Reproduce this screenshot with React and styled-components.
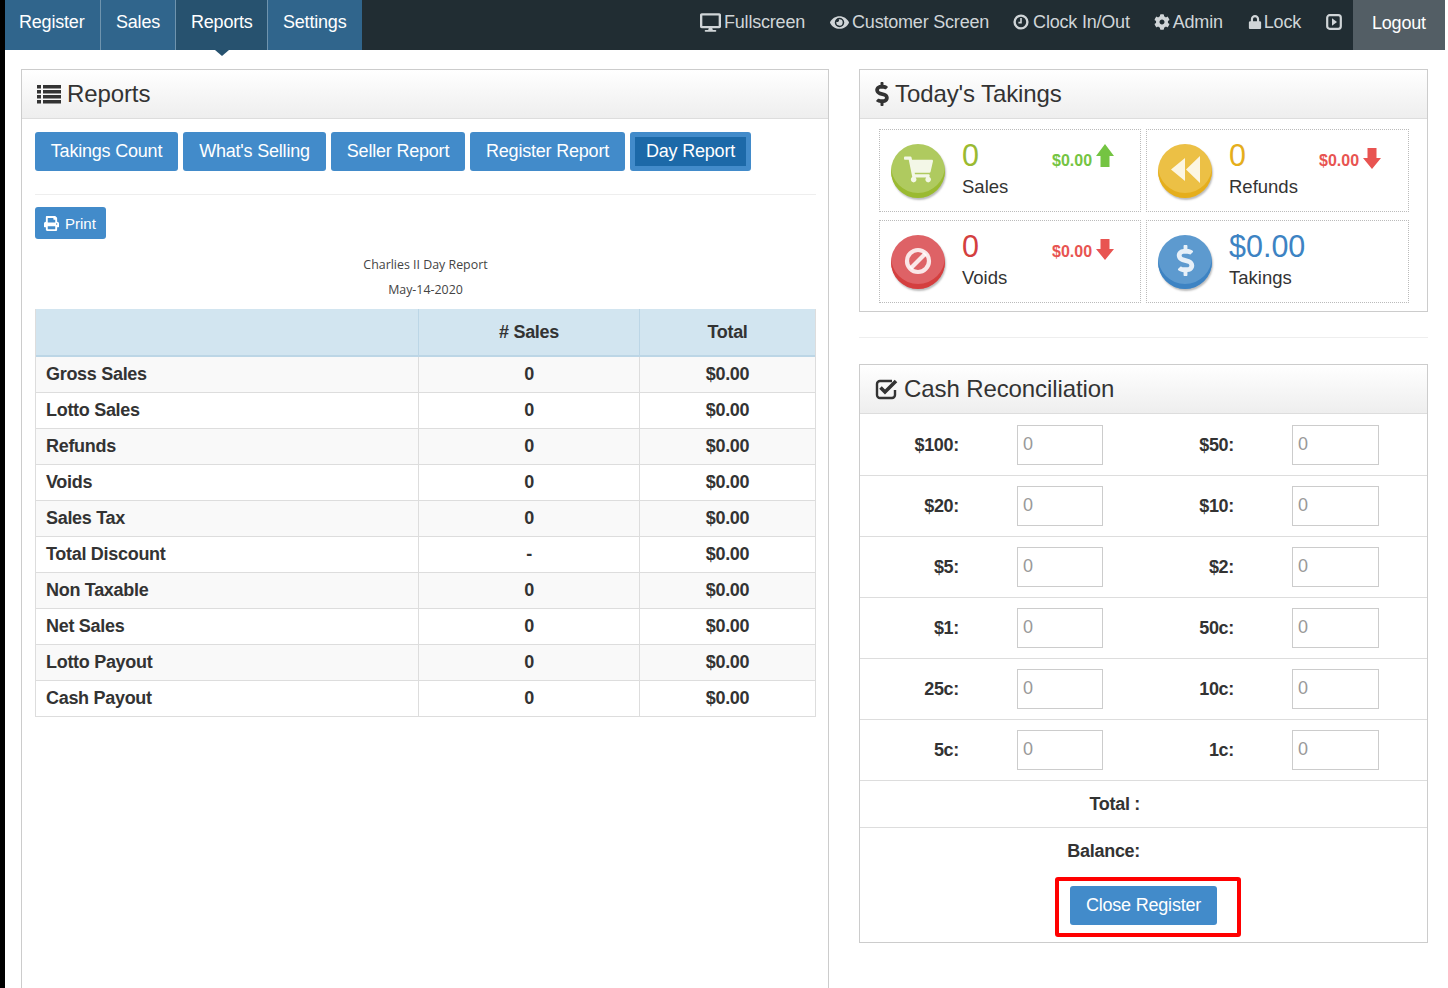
import styled, { createGlobalStyle } from "styled-components";
import { FaDesktop, FaEye, FaCog, FaLock, FaDollarSign, FaPrint, FaShoppingCart } from "react-icons/fa";

const Global = createGlobalStyle`
  * { box-sizing: border-box; }
  html, body { margin: 0; padding: 0; background: #fff; }
  body {
    font-family: "Liberation Sans", Arial, sans-serif;
    color: #333;
    border-left: 5px solid #000;
    width: 1445px;
    height: 988px;
    overflow: hidden;
  }
`;

const TopBar = styled.div`
  height: 50px;
  background: #212d33;
  display: flex;
  justify-content: space-between;
`;
const NavLeft = styled.div`
  display: flex;
`;
const NavTab = styled.div`
  position: relative;
  width: ${(p) => p.$w}px;
  height: 50px;
  padding: 12px 0 0 ${(p) => p.$pl || 15}px;
  background: ${(p) => (p.$active ? "#27526f" : "#30658c")};
  border-right: ${(p) => (p.$last ? "none" : "1px solid #6f94ae")};
  color: #fff;
  font-size: 18px;
  letter-spacing: -0.2px;
  ${(p) =>
    p.$active &&
    `&:after {
      content: "";
      position: absolute;
      left: 39px;
      top: 50px;
      border-left: 7px solid transparent;
      border-right: 7px solid transparent;
      border-top: 6px solid #27526f;
    }`}
`;
const NavRight = styled.div`
  display: flex;
  align-items: flex-start;
`;
const NavLink = styled.div`
  display: flex;
  align-items: center;
  height: 44px;
  margin-right: ${(p) => p.$mr}px;
  gap: ${(p) => p.$gap || 3}px;
  color: #d0d5d8;
  font-size: 18px;
  letter-spacing: -0.2px;
  svg { font-size: ${(p) => p.$icon || 16}px; }
`;
const Logout = styled.div`
  width: 92px;
  height: 50px;
  padding: 13px 0 0 19px;
  background: #535e65;
  color: #fff;
  font-size: 18px;
  letter-spacing: -0.2px;
`;

const Page = styled.div`
  display: grid;
  grid-template-columns: 808px 569px;
  column-gap: 30px;
  padding: 19px 0 0 16px;
`;
const Column = styled.div`
  display: flex;
  flex-direction: column;
`;
const Panel = styled.div`
  border: 1px solid #ccc;
  background: #fff;
  min-height: ${(p) => p.$min || 0}px;
`;
const PanelHead = styled.div`
  height: 49px;
  display: flex;
  align-items: center;
  gap: ${(p) => p.$gap || 6}px;
  padding-left: 15px;
  background: linear-gradient(#fff, #eee);
  border-bottom: 1px solid #ddd;
  font-size: 24px;
  letter-spacing: -0.1px;
  color: #333;
  svg { flex: none; width: ${(p) => p.$icon || 24}px; font-size: 24px; }
`;
const ReportBody = styled.div`
  padding: 13px 12px 0 13px;
`;
const BtnRow = styled.div`
  display: flex;
  gap: 5px;
  padding-bottom: 23px;
  border-bottom: 1px solid #eee;
`;
const Btn = styled.button`
  width: ${(p) => p.$w}px;
  height: 39px;
  border: ${(p) => (p.$active ? "5px solid #428bca" : "none")};
  border-radius: 3px;
  background: ${(p) => (p.$active ? "#1c69a8" : "#428bca")};
  color: #fff;
  font: 18px "Liberation Sans", Arial, sans-serif;
  letter-spacing: -0.2px;
  padding: 0;
`;
const PrintBtn = styled.button`
  display: flex;
  align-items: center;
  gap: 6px;
  width: 71px;
  height: 32px;
  margin-top: 12px;
  padding: 0 0 0 9px;
  border: none;
  border-radius: 3px;
  background: #428bca;
  color: #fff;
  font: 15px "Liberation Sans", Arial, sans-serif;
  svg { font-size: 15px; }
`;
const Captions = styled.div`
  margin: 13px 0 7px;
`;
const Caption = styled.div`
  text-align: center;
  font: 12.4px/25px "Open Sans", sans-serif;
  color: #444;
`;
const Table = styled.div`
  width: 781px;
  border-left: 1px solid #ddd;
  border-right: 1px solid #ddd;
`;
const Row = styled.div`
  display: grid;
  grid-template-columns: 382px 221px 1fr;
  height: ${(p) => (p.$head ? 48 : 36)}px;
  background: ${(p) => (p.$head ? "#d2e5f0" : p.$odd ? "#f9f9f9" : "#fff")};
  border-bottom: ${(p) => (p.$head ? "2px solid #bcd6e6" : "1px solid #ddd")};
  font-size: 18px;
  font-weight: 700;
  color: #333;
`;
const Cell = styled.div`
  display: flex;
  align-items: center;
  justify-content: ${(p) => (p.$left ? "flex-start" : "center")};
  padding-left: ${(p) => (p.$left ? 10 : 0)}px;
  border-left: ${(p) => (p.$left ? "none" : `1px solid ${p.$head ? "#bcd6e6" : "#ddd"}`)};
  letter-spacing: -0.3px;
`;

const Tiles = styled.div`
  display: grid;
  grid-template-columns: 262px 263px;
  grid-auto-rows: 83px;
  gap: 8px 5px;
  padding: 10px 18px 8px 19px;
`;
const Tile = styled.div`
  position: relative;
  display: flex;
  border: 1px dotted #bbb;
  padding: 14px 0 0 11px;
`;
const Coin = styled.div`
  width: 54px;
  height: 54px;
  border-radius: 50%;
  display: flex;
  align-items: center;
  justify-content: center;
  padding-bottom: 3px;
  background: ${(p) => p.$c};
  box-shadow: inset 0 -5px 0 ${(p) => p.$d}, 1px 2px 2px #bbb;
  color: rgba(255, 255, 255, 0.85);
  font-size: ${(p) => p.$size || 29}px;
`;
const TileText = styled.div`
  margin-left: 17px;
  margin-top: -3px;
`;
const TileValue = styled.div`
  font-size: 30.5px;
  line-height: 28px;
  color: ${(p) => p.$c};
`;
const TileLabel = styled.div`
  margin-top: 7px;
  font-size: 18.5px;
  line-height: 22px;
  color: #333;
`;
const Delta = styled.div`
  position: absolute;
  left: 172px;
  top: 1px;
  height: 60px;
  display: flex;
  align-items: center;
  gap: 4px;
  font-size: 16px;
  font-weight: 700;
  color: ${(p) => p.$c};
`;
const Arrow = styled.svg`
  margin-bottom: ${(p) => p.$up}px;
`;
const Rule = styled.div`
  height: 1px;
  margin: 25px 0 26px;
  background: #eee;
`;
const CashRow = styled.div`
  display: flex;
  height: 61px;
  border-top: ${(p) => (p.$first ? "none" : "1px solid #ddd")};
  padding-top: ${(p) => (p.$first ? 11 : 10)}px;
`;
const Pair = styled.div`
  display: flex;
  width: 275px;
`;
const CashLabel = styled.div`
  width: 99px;
  text-align: right;
  font-size: 18px;
  font-weight: 700;
  letter-spacing: -0.3px;
  line-height: 40px;
`;
const Amount = styled.input`
  width: ${(p) => p.$w}px;
  height: 40px;
  margin-left: 58px;
  padding: 0 5px 2px;
  border: 1px solid #ccc;
  font: 18px "Liberation Sans", Arial, sans-serif;
  &::placeholder { color: #999; opacity: 1; }
`;
const SumRow = styled.div`
  height: 47px;
  border-top: 1px solid #ddd;
  padding: 13px 0 0;
  font-size: 18px;
  font-weight: 700;
  letter-spacing: -0.3px;
  line-height: 20px;
  span { display: block; width: 280px; text-align: right; }
`;
const CloseBox = styled.div`
  width: 186px;
  height: 60px;
  margin: 3px 0 5px 195px;
  padding: 5px 0 0 11px;
  border: 4px solid #f00;
  border-radius: 3px;
`;

const ArrowUp = ({ c }) => (
  <Arrow $up={11} width="18" height="23" viewBox="0 0 18 23"><path d="M9 0 L18 12 H13.5 V23 H4.5 V12 H0 Z" fill={c} /></Arrow>
);
const ArrowDown = ({ c }) => (
  <Arrow $up={5} width="18" height="21" viewBox="0 0 18 21"><path d="M4.5 0 H13.5 V10 H18 L9 21 L0 10 H4.5 Z" fill={c} /></Arrow>
);
const ListIcon = () => (
  <svg height="24" viewBox="0 0 24 24" fill="#333">
    <path d="M0 3h4v3.5H0zM6 3h18v3.5H6zM0 8h4v3.5H0zM6 8h18v3.5H6zM0 13h4v3.5H0zM6 13h18v3.5H6zM0 18h4v3.5H0zM6 18h18v3.5H6z" />
  </svg>
);
const CheckIcon = () => (
  <svg height="24" viewBox="0 0 24 24">
    <path d="M20 13v5a3 3 0 0 1-3 3H5a3 3 0 0 1-3-3V7a3 3 0 0 1 3-3h12" fill="none" stroke="#333" strokeWidth="2.4" />
    <path d="M5.5 10.5 L10 15 L21 4" fill="none" stroke="#333" strokeWidth="3.6" />
  </svg>
);
const ClockIcon = () => (
  <svg width="16" height="16" viewBox="0 0 16 16" fill="none" stroke="currentColor">
    <circle cx="8" cy="8" r="6.4" strokeWidth="2.4" />
    <path d="M8 4v4.6H5.4" strokeWidth="1.6" />
  </svg>
);
const ScreenIcon = () => (
  <svg width="16" height="16" viewBox="0 0 16 16">
    <rect x="1.2" y="1.2" width="13.6" height="13.6" rx="2.5" fill="none" stroke="currentColor" strokeWidth="2.2" />
    <path d="M6 4.2 L11 8 L6 11.8 Z" fill="currentColor" />
  </svg>
);
const BanIcon = () => (
  <svg width="28" height="28" viewBox="0 0 28 28" fill="none" stroke="currentColor" strokeWidth="4.2">
    <circle cx="14" cy="14" r="11" />
    <path d="M6.5 21.5 L21.5 6.5" />
  </svg>
);
const RewindIcon = () => (
  <svg width="29" height="27" viewBox="0 0 29 27" fill="currentColor">
    <path d="M0 13.5 L14 2 V25 Z M15 13.5 L29 0 V27 Z" />
  </svg>
);

const rows = [
  ["Gross Sales", "0"], ["Lotto Sales", "0"], ["Refunds", "0"], ["Voids", "0"], ["Sales Tax", "0"],
  ["Total Discount", "-"], ["Non Taxable", "0"], ["Net Sales", "0"], ["Lotto Payout", "0"], ["Cash Payout", "0"],
];
const cash = [["$100:", "$50:"], ["$20:", "$10:"], ["$5:", "$2:"], ["$1:", "50c:"], ["25c:", "10c:"], ["5c:", "1c:"]];
const green = "#74c442";
const red = "#e85451";

export default function App() {
  return (
    <>
      <Global />
      <TopBar>
        <NavLeft>
          <NavTab $w={96} $pl={14}>Register</NavTab>
          <NavTab $w={75}>Sales</NavTab>
          <NavTab $w={92} $active>Reports</NavTab>
          <NavTab $w={94} $last>Settings</NavTab>
        </NavLeft>
        <NavRight>
          <NavLink $mr={25} $icon={21}><FaDesktop />Fullscreen</NavLink>
          <NavLink $mr={24} $icon={19}><FaEye />Customer Screen</NavLink>
          <NavLink $mr={24} $gap={4}><ClockIcon />Clock In/Out</NavLink>
          <NavLink $mr={25}><FaCog />Admin</NavLink>
          <NavLink $mr={25} $icon={14} $gap={2}><FaLock />Lock</NavLink>
          <NavLink $mr={11}><ScreenIcon /></NavLink>
          <Logout>Logout</Logout>
        </NavRight>
      </TopBar>
      <Page>
        <Panel $min={960}>
          <PanelHead><ListIcon />Reports</PanelHead>
          <ReportBody>
            <BtnRow>
              <Btn $w={143}>Takings Count</Btn>
              <Btn $w={143}>What's Selling</Btn>
              <Btn $w={134}>Seller Report</Btn>
              <Btn $w={155}>Register Report</Btn>
              <Btn $w={121} $active>Day Report</Btn>
            </BtnRow>
            <PrintBtn><FaPrint />Print</PrintBtn>
            <Captions>
              <Caption>Charlies II Day Report</Caption>
              <Caption>May-14-2020</Caption>
            </Captions>
            <Table>
              <Row $head>
                <Cell $left />
                <Cell $head># Sales</Cell>
                <Cell $head>Total</Cell>
              </Row>
              {rows.map(([name, count], i) => (
                <Row key={name} $odd={i % 2 === 0}>
                  <Cell $left>{name}</Cell>
                  <Cell>{count}</Cell>
                  <Cell>$0.00</Cell>
                </Row>
              ))}
            </Table>
          </ReportBody>
        </Panel>
        <Column>
          <Panel>
            <PanelHead $icon={14} $gap={6}><FaDollarSign />Today's Takings</PanelHead>
            <Tiles>
              <Tile>
                <Coin $c="#afca5f" $d="#9aba31"><FaShoppingCart /></Coin>
                <TileText><TileValue $c="#9aba31">0</TileValue><TileLabel>Sales</TileLabel></TileText>
                <Delta $c={green}>$0.00<ArrowUp c={green} /></Delta>
              </Tile>
              <Tile>
                <Coin $c="#ecc045" $d="#e5ae1c"><RewindIcon /></Coin>
                <TileText><TileValue $c="#e5ae1c">0</TileValue><TileLabel>Refunds</TileLabel></TileText>
                <Delta $c={red}>$0.00<ArrowDown c={red} /></Delta>
              </Tile>
              <Tile>
                <Coin $c="#de6266" $d="#d43f3f"><BanIcon /></Coin>
                <TileText><TileValue $c="#d43f3f">0</TileValue><TileLabel>Voids</TileLabel></TileText>
                <Delta $c={red}>$0.00<ArrowDown c={red} /></Delta>
              </Tile>
              <Tile>
                <Coin $c="#5d9acf" $d="#3d83c3" $size={31}><FaDollarSign /></Coin>
                <TileText><TileValue $c="#3d83c3">$0.00</TileValue><TileLabel>Takings</TileLabel></TileText>
              </Tile>
            </Tiles>
          </Panel>
          <Rule />
          <Panel>
            <PanelHead $gap={5}><CheckIcon />Cash Reconciliation</PanelHead>
            {cash.map(([a, b], i) => (
              <CashRow key={a} $first={i === 0}>
                <Pair><CashLabel>{a}</CashLabel><Amount $w={86} placeholder="0" /></Pair>
                <Pair><CashLabel>{b}</CashLabel><Amount $w={87} placeholder="0" /></Pair>
              </CashRow>
            ))}
            <SumRow><span>Total :</span></SumRow>
            <SumRow><span>Balance:</span></SumRow>
            <CloseBox><Btn $w={147}>Close Register</Btn></CloseBox>
          </Panel>
        </Column>
      </Page>
    </>
  );
}
